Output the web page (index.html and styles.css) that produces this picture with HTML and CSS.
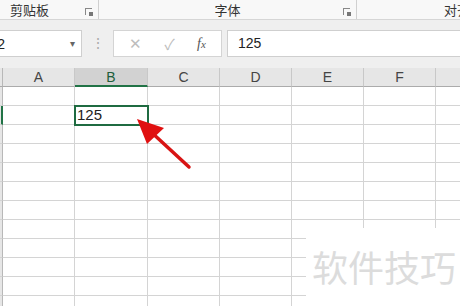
FILE: index.html
```html
<!DOCTYPE html>
<html lang="zh-CN">
<head>
    <meta charset="UTF-8">
    <title>Excel</title>
    <link rel="stylesheet" href="styles.css">
</head>
<body>
    <div class="window">

        <!-- Ribbon group labels -->
        <div class="ribbon-labels">
            <div class="group group-clip"><span>剪贴板</span><i class="launcher"></i></div>
            <div class="group group-font"><span class="center">字体</span><i class="launcher"></i></div>
            <div class="group group-align"><span>对齐</span></div>
        </div>

        <!-- Formula bar -->
        <div class="formula-row">
            <div class="name-box"><span class="name">B2</span><span class="caret">&#9662;</span></div>
            <div class="grip">⋮</div>
            <div class="func-box">
                <span class="fn cancel">✕</span>
                <span class="fn ok">✓</span>
                <span class="fn fx"><i>f</i><i>x</i></span>
            </div>
            <div class="formula-input">125</div>
        </div>

        <!-- Sheet grid -->
        <div class="sheet" id="sheet"></div>

        <svg class="arrow" width="460" height="306" viewBox="0 0 460 306">
            <line x1="189" y1="167" x2="150" y2="131" stroke="#d81414" stroke-width="3.5" stroke-linecap="round"/>
            <polygon points="137,119 164,128 147,144" fill="#e01010"/>
        </svg>

        <div class="watermark">软件技巧</div>
    </div>

    <script>
        // build the grid rows
        const sheet = document.getElementById('sheet');
        const cols = ['A', 'B', 'C', 'D', 'E', 'F', 'G'];
        const header = document.createElement('div');
        header.className = 'row head';
        header.innerHTML = '<div class="rowhead"></div>' +
            cols.map(c => `<div class="cell col${c === 'B' ? ' active' : ''}">${c}</div>`).join('');
        sheet.appendChild(header);

        for (let r = 1; r <= 12; r++) {
            const row = document.createElement('div');
            row.className = 'row';
            row.innerHTML = `<div class="rowhead${r === 2 ? ' active' : ''}"></div>` +
                cols.map(c => {
                    const sel = (r === 2 && c === 'B');
                    return `<div class="cell${sel ? ' selected' : ''}">${sel ? '125' : ''}</div>`;
                }).join('');
            sheet.appendChild(row);
        }
    </script>
</body>
</html>
```

FILE: styles.css
```css
* {
    box-sizing: border-box;
    margin: 0;
    padding: 0;
}

html, body {
    width: 460px;
    height: 306px;
    overflow: hidden;
}

body {
    font-family: 'Liberation Sans', 'Noto Sans CJK SC', sans-serif;
    background-color: #ffffff;
    color: #333;
}

.window {
    position: relative;
    width: 460px;
    height: 306px;
    overflow: hidden;
}

/* Ribbon labels */
.ribbon-labels {
    display: flex;
    height: 20px;
    background-color: #f8f8f8;
    border-bottom: 1px solid #d6d6d6;
    font-size: 13px;
    color: #333;
    white-space: nowrap;
    overflow: hidden;
}

.group {
    position: relative;
    display: flex;
    align-items: center;
    height: 19px;
    border-right: 1px solid #d0d0d0;
    flex-shrink: 0;
}

.group-clip {
    width: 99px;
    padding-left: 10px;
}

.group-font {
    width: 258px;
    justify-content: center;
}

.group-align {
    flex: 1;
    border-right: none;
    padding-left: 87px;
}

.launcher {
    position: absolute;
    right: 6px;
    top: 8px;
    width: 7px;
    height: 7px;
    border-left: 1px solid #888;
    border-top: 1px solid #888;
}

.launcher::after {
    content: '';
    position: absolute;
    right: -1px;
    bottom: -1px;
    width: 4px;
    height: 4px;
    background-color: #777;
}

/* Formula bar */
.formula-row {
    display: flex;
    align-items: flex-start;
    height: 48px;
    padding-top: 10px;
    background-color: #efefef;
}

.name-box {
    display: flex;
    align-items: center;
    justify-content: space-between;
    width: 82px;
    height: 27px;
    background-color: #fff;
    border: 1px solid #cfcfcf;
    border-left: none;
    padding-right: 6px;
    font-size: 14px;
    overflow: hidden;
}

.name {
    margin-left: -12px;
    color: #222;
}

.caret {
    font-size: 10px;
    color: #666;
}

.grip {
    width: 31px;
    height: 27px;
    line-height: 27px;
    text-align: center;
    color: #aaa;
    font-size: 14px;
}

.func-box {
    display: flex;
    align-items: center;
    justify-content: space-around;
    width: 109px;
    height: 27px;
    background-color: #fff;
    border: 1px solid #d4d4d4;
    padding: 0 4px;
}

.fn {
    color: #bdbdbd;
    font-size: 15px;
}

.fx {
    color: #555;
    font-family: 'Liberation Serif', serif;
    font-size: 14px;
}

.fx i:last-child {
    font-size: 11px;
}

.formula-input {
    flex: 1;
    height: 27px;
    margin-left: 5px;
    background-color: #fff;
    border: 1px solid #cfcfcf;
    border-right: none;
    padding-left: 10px;
    line-height: 25px;
    font-size: 14px;
    color: #222;
}

/* Sheet */
.row {
    display: flex;
    height: 19px;
}

.rowhead {
    width: 3px;
    flex-shrink: 0;
    background-color: #e6e6e6;
    border-right: 1px solid #b8b8b8;
    border-bottom: 1px solid #d4d4d4;
}

.rowhead.active {
    border-right: 2px solid #217346;
}

.cell {
    width: 72px;
    flex-shrink: 0;
    border-right: 1px solid #d4d4d4;
    border-bottom: 1px solid #d4d4d4;
    font-size: 15px;
    line-height: 18px;
    padding-left: 2px;
    color: #222;
    overflow: hidden;
}

.cell:nth-child(3) {
    width: 73px;
}

.head .cell {
    background-color: #e6e6e6;
    border-right-color: #c8c8c8;
    border-bottom: 1px solid #ababab;
    text-align: center;
    padding-left: 0;
    font-size: 14px;
    color: #444;
}

.head .rowhead {
    border-bottom: 1px solid #ababab;
}

.head .cell.active {
    background-color: #d2d2d2;
    border-bottom: 2px solid #217346;
    color: #1e5e3a;
}

.cell.selected {
    outline: 2px solid #1f6b41;
    outline-offset: -1px;
    position: relative;
}

/* Overlays */
.arrow {
    position: absolute;
    left: 0;
    top: 0;
    pointer-events: none;
}

.watermark {
    position: absolute;
    left: 306px;
    top: 228px;
    width: 154px;
    height: 78px;
    background-color: #fff;
    padding: 17px 0 0 6px;
    font-family: 'Noto Sans CJK SC', sans-serif;
    font-size: 36px;
    line-height: 42px;
    color: #dcdcdc;
    white-space: nowrap;
}
```
